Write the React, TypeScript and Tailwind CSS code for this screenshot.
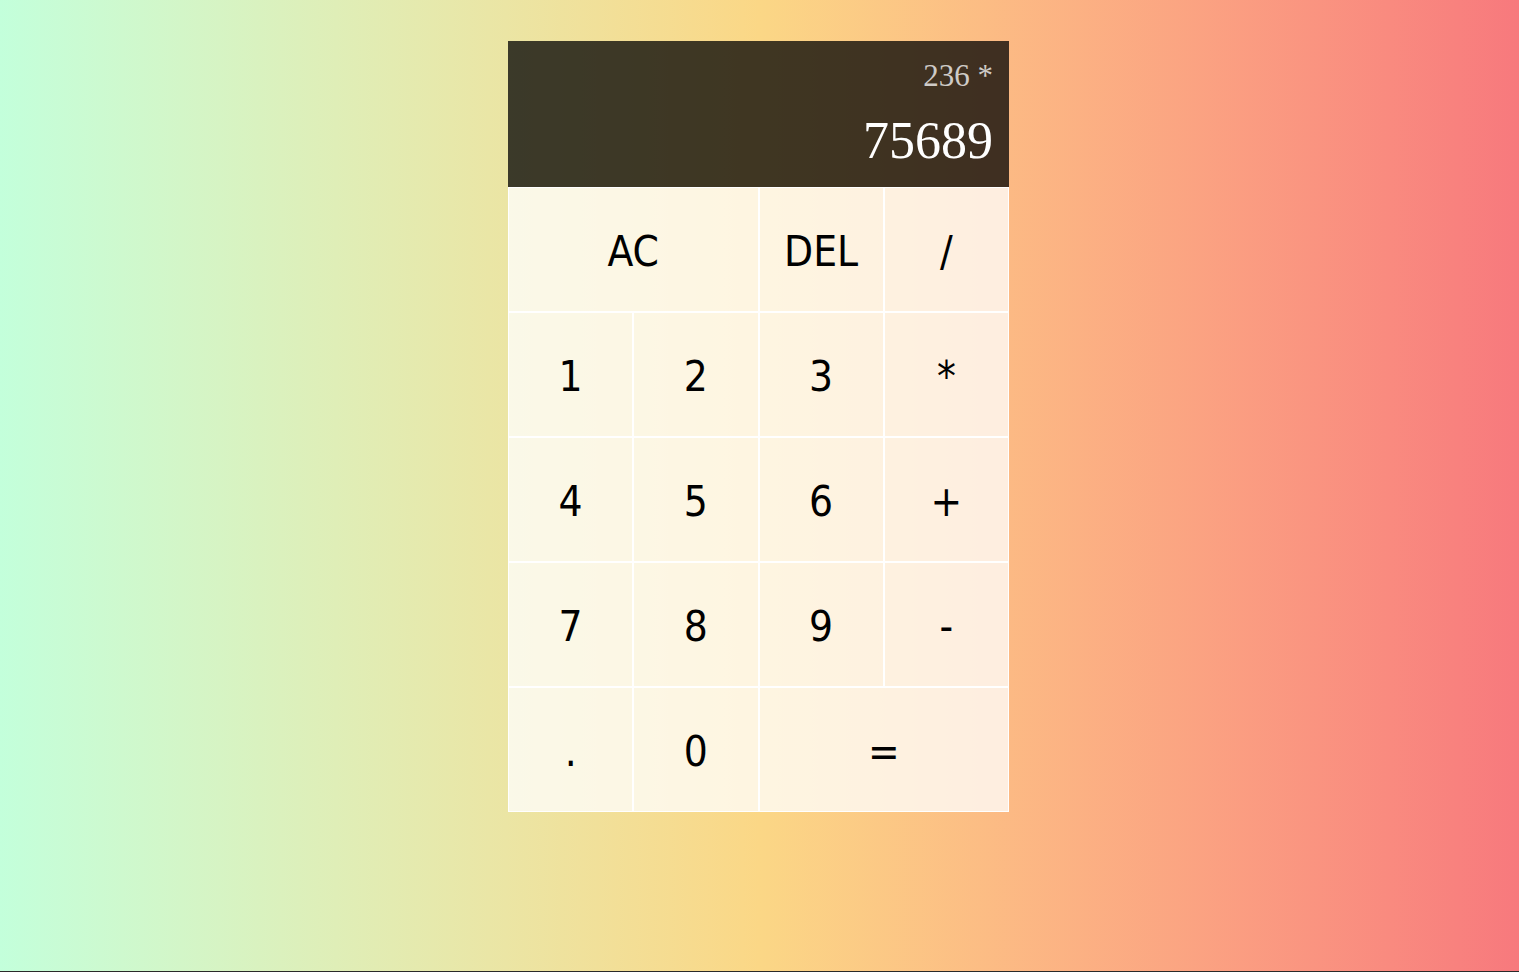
import React from "react";

const btn =
  "flex items-center justify-center border border-white bg-white/75 text-black text-[42px] leading-none pt-[4px] cursor-pointer";

export default function App() {
  const keys: { label: string; span?: boolean }[] = [
    { label: "AC", span: true },
    { label: "DEL" },
    { label: "/" },
    { label: "1" },
    { label: "2" },
    { label: "3" },
    { label: "*" },
    { label: "4" },
    { label: "5" },
    { label: "6" },
    { label: "+" },
    { label: "7" },
    { label: "8" },
    { label: "9" },
    { label: "-" },
    { label: "." },
    { label: "0" },
    { label: "=", span: true },
  ];
  return (
    <div className="h-[972px] w-full border-b border-[#2a2a2a] bg-linear-to-r from-[#c3ffdb] via-[#fbd786] to-[#f7797d] flex justify-center pt-[41px] pr-[2px]">
      <div className="w-[501px] flex flex-col self-start">
        <div className="h-[146px] bg-black/75 flex flex-col items-end justify-around px-4 pt-[8px] pb-[7px] font-['Liberation_Serif',serif]">
          <div className="text-[31px] text-white/75 leading-[1.15]">236 *</div>
          <div className="text-[52px] text-white leading-[1.15]">75689</div>
        </div>
        <div className="grid grid-cols-4 auto-rows-[125px] font-['DejaVu_Sans_Condensed','DejaVu_Sans',sans-serif]">
          {keys.map((k, i) => (
            <button key={i} className={`${btn} ${k.span ? "col-span-2" : ""}`}>
              {k.label}
            </button>
          ))}
        </div>
      </div>
    </div>
  );
}
